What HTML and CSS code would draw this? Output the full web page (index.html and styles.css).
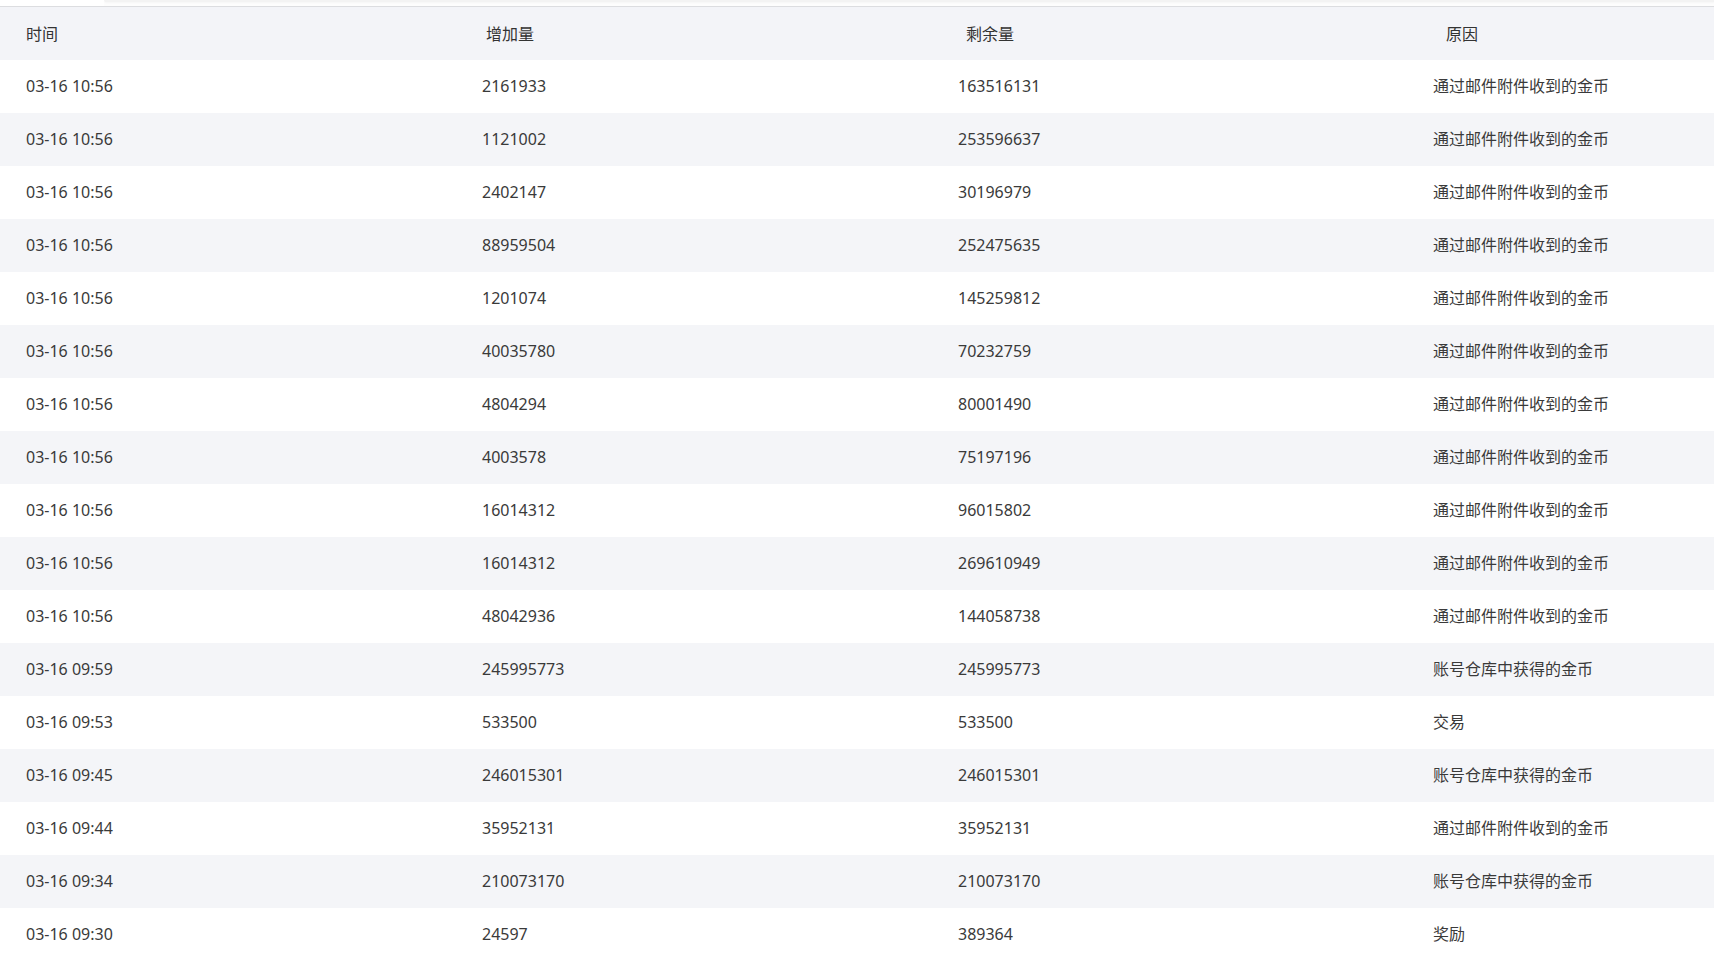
FILE: index.html
```html
<!DOCTYPE html>
<html lang="zh-CN">
<head>
<meta charset="utf-8">
<title>金币记录</title>
<link rel="stylesheet" href="styles.css">
</head>
<body>
<div class="topbar"><div class="topbar-gap"></div><div class="topbar-card"></div></div>
<div class="table">
  <div class="thead">
    <div class="th">时间</div>
    <div class="th">增加量</div>
    <div class="th">剩余量</div>
    <div class="th">原因</div>
  </div>
  <div class="tbody">
    <div class="tr"><div class="td">03-16 10:56</div><div class="td">2161933</div><div class="td">163516131</div><div class="td cjk">通过邮件附件收到的金币</div></div>
    <div class="tr"><div class="td">03-16 10:56</div><div class="td">1121002</div><div class="td">253596637</div><div class="td cjk">通过邮件附件收到的金币</div></div>
    <div class="tr"><div class="td">03-16 10:56</div><div class="td">2402147</div><div class="td">30196979</div><div class="td cjk">通过邮件附件收到的金币</div></div>
    <div class="tr"><div class="td">03-16 10:56</div><div class="td">88959504</div><div class="td">252475635</div><div class="td cjk">通过邮件附件收到的金币</div></div>
    <div class="tr"><div class="td">03-16 10:56</div><div class="td">1201074</div><div class="td">145259812</div><div class="td cjk">通过邮件附件收到的金币</div></div>
    <div class="tr"><div class="td">03-16 10:56</div><div class="td">40035780</div><div class="td">70232759</div><div class="td cjk">通过邮件附件收到的金币</div></div>
    <div class="tr"><div class="td">03-16 10:56</div><div class="td">4804294</div><div class="td">80001490</div><div class="td cjk">通过邮件附件收到的金币</div></div>
    <div class="tr"><div class="td">03-16 10:56</div><div class="td">4003578</div><div class="td">75197196</div><div class="td cjk">通过邮件附件收到的金币</div></div>
    <div class="tr"><div class="td">03-16 10:56</div><div class="td">16014312</div><div class="td">96015802</div><div class="td cjk">通过邮件附件收到的金币</div></div>
    <div class="tr"><div class="td">03-16 10:56</div><div class="td">16014312</div><div class="td">269610949</div><div class="td cjk">通过邮件附件收到的金币</div></div>
    <div class="tr"><div class="td">03-16 10:56</div><div class="td">48042936</div><div class="td">144058738</div><div class="td cjk">通过邮件附件收到的金币</div></div>
    <div class="tr"><div class="td">03-16 09:59</div><div class="td">245995773</div><div class="td">245995773</div><div class="td cjk">账号仓库中获得的金币</div></div>
    <div class="tr"><div class="td">03-16 09:53</div><div class="td">533500</div><div class="td">533500</div><div class="td cjk">交易</div></div>
    <div class="tr"><div class="td">03-16 09:45</div><div class="td">246015301</div><div class="td">246015301</div><div class="td cjk">账号仓库中获得的金币</div></div>
    <div class="tr"><div class="td">03-16 09:44</div><div class="td">35952131</div><div class="td">35952131</div><div class="td cjk">通过邮件附件收到的金币</div></div>
    <div class="tr"><div class="td">03-16 09:34</div><div class="td">210073170</div><div class="td">210073170</div><div class="td cjk">账号仓库中获得的金币</div></div>
    <div class="tr"><div class="td">03-16 09:30</div><div class="td">24597</div><div class="td">389364</div><div class="td cjk">奖励</div></div>
  </div>
</div>
</body>
</html>
```
FILE: styles.css
```css
html, body {
  margin: 0;
  padding: 0;
  background: #ffffff;
  overflow: hidden;
}
body {
  font-family: "Noto Sans", "Noto Sans CJK SC", sans-serif;
  font-size: 16px;
  color: #3a3a3a;
}
.topbar {
  display: flex;
  height: 6px;
  background: #fdfdfd;
}
.topbar-gap {
  width: 104px;
  background: #ffffff;
}
.topbar-card {
  flex: 1;
  height: 2px;
  background: #f3f3f3;
  border-bottom-left-radius: 6px;
  box-shadow: 0 1px 2px rgba(0, 0, 0, 0.03);
}
.table {
  border-top: 1px solid #dcdde0;
}
.thead {
  display: grid;
  grid-template-columns: 460px 480px 480px 1fr;
  height: 53px;
  align-items: center;
  background: #f3f4f8;
}
.th {
  padding-left: 26px;
  padding-bottom: 2px;
  color: #333333;
}
.tr {
  display: grid;
  grid-template-columns: 456px 476px 475px 1fr;
  height: 53px;
  align-items: center;
  background: #ffffff;
}
.tr:nth-child(even) {
  background: #f4f5f8;
}
.td {
  padding-left: 26px;
  padding-bottom: 2px;
  white-space: nowrap;
}
.td.cjk {
  padding-bottom: 4px;
}
```
